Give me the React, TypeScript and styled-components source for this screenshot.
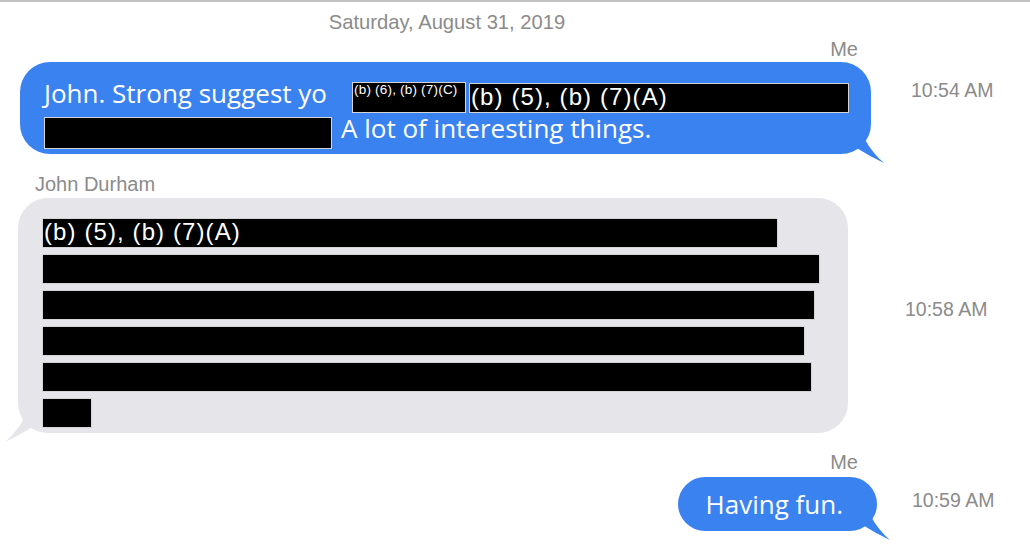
import React from "react";
import styled, { createGlobalStyle } from "styled-components";

const Global = createGlobalStyle`
  html, body { margin: 0; padding: 0; background: #ffffff; }
  body { font-family: "Liberation Sans", Arial, sans-serif; }
`;

const META = "#8b8b8b";
const BLUE = "#3b82f1";
const GRAY = "#e5e5ea";

const Page = styled.div`
  width: 1030px;
  height: 550px;
  box-sizing: border-box;
  border-top: 2px solid #c3c3c3;
  overflow: hidden;
  display: flex;
  flex-direction: column;
`;

const DateLabel = styled.div`
  width: 894px;
  padding-top: 9px;
  text-align: center;
  font-size: 20.2px;
  line-height: 23px;
  color: ${META};
`;

const Row = styled.div<{ $mt: number }>`
  display: grid;
  grid-template-columns: 877px 1fr;
  align-items: start;
  margin-top: ${(p) => p.$mt}px;
`;

const MessageCol = styled.div<{ $me?: boolean }>`
  display: flex;
  flex-direction: column;
  align-items: ${(p) => (p.$me ? "flex-end" : "flex-start")};
`;

const Sender = styled.div<{ $me?: boolean }>`
  font-size: 20px;
  line-height: 23px;
  color: ${META};
  padding: ${(p) => (p.$me ? "0 19px 0 0" : "0 0 0 35px")};
`;

const Time = styled.div<{ $top: number; $indent: number }>`
  padding-top: ${(p) => p.$top}px;
  padding-left: ${(p) => p.$indent}px;
  font-size: 19.5px;
  line-height: 23px;
  color: ${META};
  white-space: nowrap;
`;

const Bubble = styled.div<{ $me?: boolean; $mt: number; $mr?: number }>`
  position: relative;
  box-sizing: border-box;
  margin-top: ${(p) => p.$mt}px;
  margin-right: ${(p) => p.$mr ?? 0}px;
  margin-left: ${(p) => (p.$me ? 0 : 18)}px;
  background: ${(p) => (p.$me ? BLUE : GRAY)};
  color: ${(p) => (p.$me ? "#ffffff" : "#000000")};
  border-radius: 30px;
  font-family: "Open Sans", "Noto Sans", sans-serif;
`;

const LongBubble = styled(Bubble)`
  padding: 18px 22px 4px 24px;
  display: flex;
  flex-direction: column;
`;

const ShortBubble = styled(Bubble)`
  height: 54px;
  padding: 0 34px 0 28px;
  display: flex;
  align-items: center;
  border-radius: 27px;
  font-size: 26px;
`;

const RedactedBubble = styled(Bubble)`
  padding: 20px 28px 5px 24px;
  display: flex;
  flex-direction: column;
  gap: 6px;
`;

const Line = styled.div<{ $gap: number }>`
  display: flex;
  align-items: center;
  height: 35px;
  gap: ${(p) => p.$gap}px;
  font-size: 26px;
  white-space: nowrap;
`;

const Words = styled.span<{ $w?: number }>`
  align-self: flex-start;
  line-height: 25px;
  padding-top: 1px;
  ${(p) => (p.$w ? `width: ${p.$w}px; flex: none;` : "")}
`;

const Redaction = styled.div<{ $h: number; $small?: boolean }>`
  box-sizing: border-box;
  height: ${(p) => p.$h}px;
  background: #000;
  border: 1px solid #d4d4d4;
  color: #fff;
  font-family: "Liberation Sans", Arial, sans-serif;
  font-size: ${(p) => (p.$small ? "13.5px" : "24px")};
  letter-spacing: ${(p) => (p.$small ? "0.2px" : "1.1px")};
  line-height: ${(p) => (p.$small ? "14px" : "26px")};
  padding-left: 1px;
  white-space: nowrap;
  overflow: hidden;
  flex: none;
`;

const Tail = styled.svg<{ $side: "left" | "right" }>`
  position: absolute;
  width: 40px;
  height: 30px;
  bottom: -10px;
  ${(p) => (p.$side === "left" ? "left: -14px;" : "right: -14px;")}
  overflow: visible;
`;

const LeftTail = () => (
  <Tail $side="left" viewBox="0 0 40 30">
    <path d="M21 4 Q12 20 1 29 Q16 22 30 13 L32 4 Z" fill={GRAY} />
  </Tail>
);

const RightTail = () => (
  <Tail $side="right" viewBox="0 0 40 30">
    <path d="M19 4 Q28 20 39 29 Q24 22 10 13 L8 4 Z" fill={BLUE} />
  </Tail>
);

const bars = [736, 778, 773, 763, 770, 50];

export default function App() {
  return (
    <>
      <Global />
      <Page>
        <DateLabel>Saturday, August 31, 2019</DateLabel>

        <Row $mt={4}>
          <MessageCol $me>
            <Sender $me>Me</Sender>
            <LongBubble $me $mt={1} $mr={6}>
              <Line $gap={3}>
                <Words $w={305}>John. Strong suggest yo</Words>
                <Redaction $h={31} $small style={{ width: 114 }}>
                  (b) (6), (b) (7)(C)
                </Redaction>
                <Redaction $h={30} style={{ width: 380 }}>
                  (b) (5), (b) (7)(A)
                </Redaction>
              </Line>
              <Line $gap={9}>
                <Redaction $h={32} style={{ width: 288 }} />
                <Words>A lot of interesting things.</Words>
              </Line>
              <RightTail />
            </LongBubble>
          </MessageCol>
          <Time $top={41} $indent={34}>10:54 AM</Time>
        </Row>

        <Row $mt={19}>
          <MessageCol>
            <Sender>John Durham</Sender>
            <RedactedBubble $mt={2}>
              {bars.map((w, i) => (
                <Redaction key={i} $h={30} style={{ width: w }}>
                  {i === 0 ? "(b) (5), (b) (7)(A)" : null}
                </Redaction>
              ))}
              <LeftTail />
            </RedactedBubble>
          </MessageCol>
          <Time $top={125} $indent={28}>10:58 AM</Time>
        </Row>

        <Row $mt={18}>
          <MessageCol $me>
            <Sender $me>Me</Sender>
            <ShortBubble $me $mt={3}>
              Having fun.
              <RightTail />
            </ShortBubble>
          </MessageCol>
          <Time $top={38} $indent={35}>10:59 AM</Time>
        </Row>
      </Page>
    </>
  );
}
